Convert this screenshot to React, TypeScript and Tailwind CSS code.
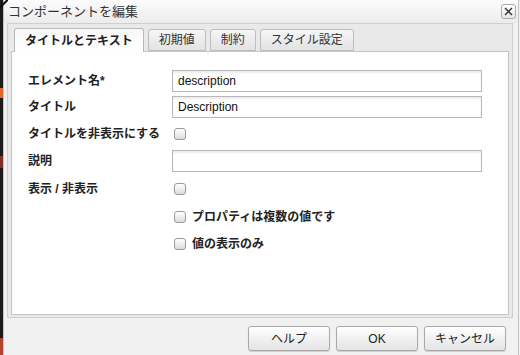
import React from "react";

const FONT = { fontFamily: '"Liberation Sans", "Noto Sans CJK JP", sans-serif' };

const TABS = ["タイトルとテキスト", "初期値", "制約", "スタイル設定"];

function Checkbox() {
  return (
    <span className="inline-block w-[12px] h-[12px] shrink-0 rounded-[3px] border border-[#9a9a9a] bg-gradient-to-b from-white to-[#dcdcdc]" />
  );
}

function TextInput({ value }: { value: string }) {
  return (
    <div className="w-[310px] h-[22px] border border-[#b8b8b8] bg-white shadow-[inset_0_2px_2px_rgba(0,0,0,0.08)] flex items-center pl-[5px] text-[12px] text-[#111]">
      {value}
    </div>
  );
}

function Row({ label, h, children }: { label?: string; h: string; children?: React.ReactNode }) {
  return (
    <div className={`flex items-center ${h}`}>
      <div className="w-[160px] shrink-0 pl-[16px] whitespace-nowrap text-[12px] font-bold text-[#222]">{label}</div>
      {children}
    </div>
  );
}

function Button({ label }: { label: string }) {
  return (
    <button className="w-[82px] h-[25px] rounded-[3px] border border-[#a9a9a9] bg-gradient-to-b from-white to-[#e4e4e4] shadow-[0_1px_1px_rgba(0,0,0,0.15)] text-[12px] text-[#222] flex items-center justify-center">
      {label}
    </button>
  );
}

export default function App() {
  return (
    <div className="relative w-[520px] h-[355px] overflow-hidden flex bg-[#f1f1f1]" style={FONT}>
      <div className="w-[3px] flex flex-col bg-[#1b1b1b]">
        <div className="h-[88px]" />
        <div className="h-[10px] bg-[#e0662a]" />
        <div className="h-[58px]" />
        <div className="h-[12px] bg-[#8a2a2a]" />
        <div className="h-[170px]" />
        <div className="h-[17px] bg-[#b8402f]" />
      </div>
      <svg className="absolute left-0 top-0" width="8" height="8" viewBox="0 0 8 8">
        <path d="M0 6 L6 0 L8 0 L8 1 L1 8 L0 8 Z" fill="#111" />
      </svg>

      <div className="flex-1 flex flex-col border-l border-r border-[#c4c4c4] mr-[1px]">
        <div className="h-[23px] flex items-center justify-between pl-[4px] pr-[2px] bg-gradient-to-b from-[#fcfcfc] to-[#ececec]">
          <span className="text-[13px] text-[#333]">コンポーネントを編集</span>
          <span className="w-[15px] h-[15px] rounded-[3px] border border-[#aaa] bg-gradient-to-b from-white to-[#e6e6e6] flex items-center justify-center">
            <svg width="9" height="9" viewBox="0 0 9 9">
              <path d="M1 1 L8 8 M8 1 L1 8" stroke="#333" strokeWidth="1.4" />
            </svg>
          </span>
        </div>

        <div className="ml-[3px] mr-[5px] h-[295px] border border-[#cfcfcf] bg-[#e9e9e9] px-[3px] pb-[2px] flex flex-col">
          <div className="h-[27px] flex items-end gap-[4px] pl-[3px]">
            {TABS.map((t, i) =>
              i === 0 ? (
                <div
                  key={t}
                  className="h-[24px] px-[10px] rounded-t-[3px] border border-b-0 border-[#b9b9b9] bg-gradient-to-b from-[#f7f7f7] to-white flex items-center text-[12px] font-bold text-[#222] relative top-[1px]"
                >
                  {t}
                </div>
              ) : (
                <div
                  key={t}
                  className="h-[22px] px-[10px] rounded-t-[3px] border border-[#bdbdbd] bg-gradient-to-b from-[#f6f6f6] to-[#e2e2e2] flex items-center text-[12px] text-[#333]"
                >
                  {t}
                </div>
              )
            )}
          </div>
          <div className="flex-1 border border-[#c6c6c6] bg-white pt-[18px] flex flex-col">
            <Row label="エレメント名*" h="h-[22px]">
              <TextInput value="description" />
            </Row>
            <Row label="タイトル" h="h-[22px] mt-[4px]">
              <TextInput value="Description" />
            </Row>
            <Row label="タイトルを非表示にする" h="h-[32px]">
              <span className="pl-[2px] flex"><Checkbox /></span>
            </Row>
            <Row label="説明" h="h-[22px]">
              <TextInput value="" />
            </Row>
            <Row label="表示 / 非表示" h="h-[33px]">
              <span className="pl-[2px] flex"><Checkbox /></span>
            </Row>
            <Row h="h-[24px]">
              <span className="pl-[2px] flex items-center gap-[6px] text-[12px] font-bold text-[#222]">
                <Checkbox />
                プロパティは複数の値です
              </span>
            </Row>
            <Row h="h-[30px]">
              <span className="pl-[2px] flex items-center gap-[6px] text-[12px] font-bold text-[#222]">
                <Checkbox />
                値の表示のみ
              </span>
            </Row>
          </div>
        </div>

        <div className="flex justify-end gap-[6px] pt-[8px] pr-[12px]">
          <Button label="ヘルプ" />
          <Button label="OK" />
          <Button label="キャンセル" />
        </div>
      </div>
    </div>
  );
}
